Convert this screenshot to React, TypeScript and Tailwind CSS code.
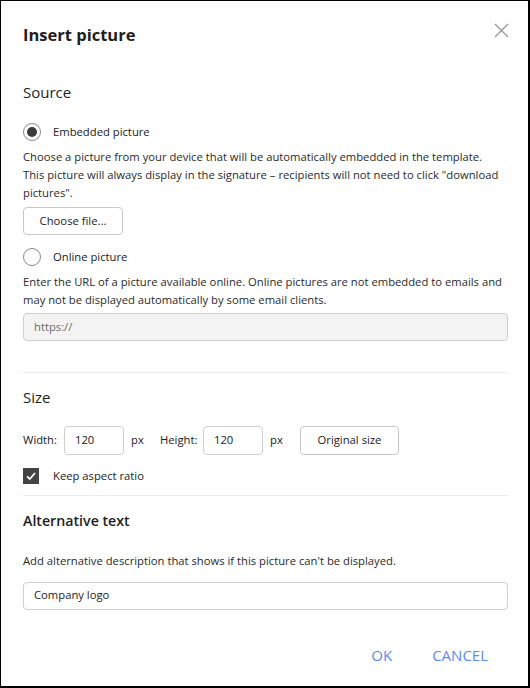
const font = { fontFamily: '"Open Sans", "Noto Sans", sans-serif' }

const Radio = ({ checked }: { checked?: boolean }) => (
  <span className="flex h-[18px] w-[18px] shrink-0 items-center justify-center rounded-full border border-[#8a8a8a] bg-white">
    {checked && <span className="h-[10px] w-[10px] rounded-full bg-[#3b3b3b]" />}
  </span>
)

export default function App() {
  return (
    <div
      className="flex h-[688px] w-[530px] flex-col border-t border-l border-r-2 border-b-2 border-black bg-white text-[#222]"
      style={font}
    >
      <div className="flex items-start justify-between pl-[22px] pr-[19px] pt-[21px]">
        <h1 className="text-[16.5px] font-bold leading-[26px] text-[#1e1e1e]">Insert picture</h1>
        <svg width="15" height="15" viewBox="0 0 15 15" className="mt-[1px]">
          <path d="M1 1 L14 14 M14 1 L1 14" stroke="#9a9a9a" strokeWidth="1.4" fill="none" />
        </svg>
      </div>

      <div className="pl-[22px] pr-[20px] text-[11.25px]">
        <h2 className="mt-[33px] text-[15px] leading-[22px] text-[#1e1e1e]">Source</h2>

        <label className="mt-[20px] flex items-center gap-[12px]">
          <Radio checked />
          <span>Embedded picture</span>
        </label>
        <p className="mt-[7px] leading-[18px] text-[#2a2a2a]">
          Choose a picture from your device that will be automatically embedded in the template.
          <br />
          This picture will always display in the signature – recipients will not need to click
          "download pictures".
        </p>
        <button className="mt-[5px] h-[28px] w-[100px] rounded-[4px] border border-[#c8c8c8] bg-white text-[#222]">
          Choose file...
        </button>

        <label className="mt-[13px] flex items-center gap-[12px]">
          <Radio />
          <span>Online picture</span>
        </label>
        <p className="mt-[7px] leading-[18px] text-[#2a2a2a]">
          Enter the URL of a picture available online. Online pictures are not embedded to emails
          and may not be displayed automatically by some email clients.
        </p>
        <div className="mt-[4px] flex h-[28px] items-center rounded-[4px] border border-[#cfcfcf] bg-[#f3f3f3] px-[10px] text-[#6b6b6b]">
          https://
        </div>

        <div className="mt-[31px] h-px bg-[#ececec]" />

        <h2 className="mt-[13px] text-[15px] leading-[22px] text-[#1e1e1e]">Size</h2>
        <div className="mt-[18px] flex items-center">
          <span className="w-[41px]">Width:</span>
          <div className="flex h-[29px] w-[60px] items-center rounded-[4px] border border-[#cfcfcf] px-[10px]">
            120
          </div>
          <span className="ml-[7px] w-[29px]">px</span>
          <span className="w-[43px]">Height:</span>
          <div className="flex h-[29px] w-[60px] items-center rounded-[4px] border border-[#cfcfcf] px-[10px]">
            120
          </div>
          <span className="ml-[7px] w-[30px]">px</span>
          <button className="h-[29px] w-[99px] rounded-[4px] border border-[#c8c8c8] bg-white">
            Original size
          </button>
        </div>
        <label className="mt-[13px] flex items-center gap-[14px]">
          <span className="flex h-[16px] w-[16px] items-center justify-center bg-[#434343]">
            <svg width="12" height="12" viewBox="0 0 12 12">
              <path d="M2 6.3 L4.8 9 L10 3" stroke="#fff" strokeWidth="1.8" fill="none" />
            </svg>
          </span>
          <span>Keep aspect ratio</span>
        </label>

        <div className="mt-[10px] h-px bg-[#ececec]" />

        <h2 className="mt-[14px] text-[14.2px] font-semibold leading-[22px] text-[#1e1e1e]">
          Alternative text
        </h2>
        <p className="mt-[20px] leading-[18px] text-[#2a2a2a]">
          Add alternative description that shows if this picture can't be displayed.
        </p>
        <div className="mt-[12px] flex h-[28px] items-center rounded-[4px] border border-[#cfcfcf] bg-white px-[10px]">
          Company logo
        </div>
      </div>

      <div className="mt-auto flex justify-end gap-[40px] pb-[20px] pr-[40px] text-[15px] text-[#5b8def]">
        <button>OK</button>
        <button>CANCEL</button>
      </div>
    </div>
  )
}
